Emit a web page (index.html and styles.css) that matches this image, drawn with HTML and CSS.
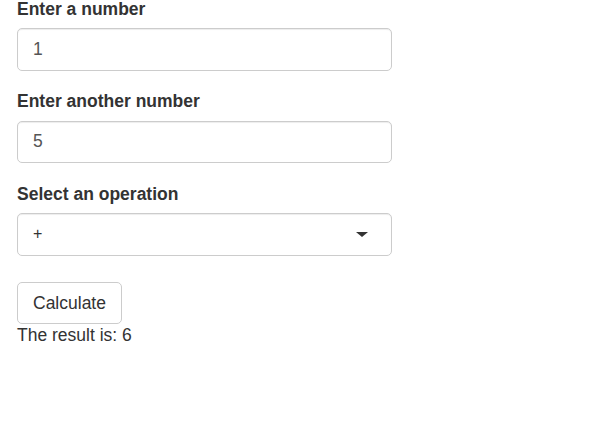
FILE: index.html
```html
<!DOCTYPE html>
<html>
<head>
<meta charset="utf-8">
<link rel="stylesheet" href="styles.css">
</head>
<body>
<div class="page">
  <div class="form-group">
    <label class="control-label" for="n1">Enter a number</label>
    <input class="form-control" id="n1" type="text" inputmode="numeric" value="1">
  </div>
  <div class="form-group">
    <label class="control-label" for="n2">Enter another number</label>
    <input class="form-control" id="n2" type="text" inputmode="numeric" value="5">
  </div>
  <div class="form-group">
    <label class="control-label">Select an operation</label>
    <div class="select-input">
      <span class="select-value">+</span>
      <span class="select-caret"></span>
    </div>
  </div>
  <button class="btn" type="button">Calculate</button>
  <div class="result">The result is: 6</div>
</div>
</body>
</html>
```
FILE: styles.css
```css
html, body {
  margin: 0;
  padding: 0;
  background: #fff;
}
body {
  font-family: "Liberation Sans", Arial, Helvetica, sans-serif;
  font-size: 17.5px;
  line-height: 25px;
  color: #333;
}
.page {
  padding-left: 17px;
  margin-top: -3.25px;
  display: flex;
  flex-direction: column;
  align-items: flex-start;
}
.form-group {
  margin-bottom: 18.75px;
  width: 375px;
}
.control-label {
  display: block;
  font-weight: bold;
  margin-bottom: 6.25px;
  line-height: 25px;
}
.form-control {
  display: block;
  box-sizing: border-box;
  width: 100%;
  height: 42.5px;
  padding: 7.5px 15px;
  font-family: inherit;
  font-size: 17.5px;
  line-height: 25px;
  color: #555;
  background: #fff;
  border: 1px solid #ccc;
  border-radius: 5px;
  box-shadow: inset 0 1px 1px rgba(0,0,0,.075);
  outline: none;
}
.select-input {
  box-sizing: border-box;
  height: 42.5px;
  width: 100%;
  padding: 7.5px 15px;
  border: 1px solid #ccc;
  border-radius: 5px;
  box-shadow: inset 0 1px 1px rgba(0,0,0,.075);
  display: flex;
  align-items: center;
  justify-content: space-between;
  color: #333;
}
.select-value {
  font-size: 16px;
  line-height: 20px;
}
.select-caret {
  width: 0;
  height: 0;
  border-style: solid;
  border-width: 5.5px 6px 0 6px;
  border-color: #333 transparent transparent transparent;
  margin-right: 8px;
}
.btn {
  margin-top: 8px;
  box-sizing: border-box;
  height: 42px;
  padding: 7.5px 15px;
  font-family: inherit;
  font-size: 17.5px;
  line-height: 25px;
  color: #333;
  background: #fff;
  border: 1px solid #ccc;
  border-radius: 5px;
}
.result {
  line-height: 25px;
  margin-top: -1px;
}
```
